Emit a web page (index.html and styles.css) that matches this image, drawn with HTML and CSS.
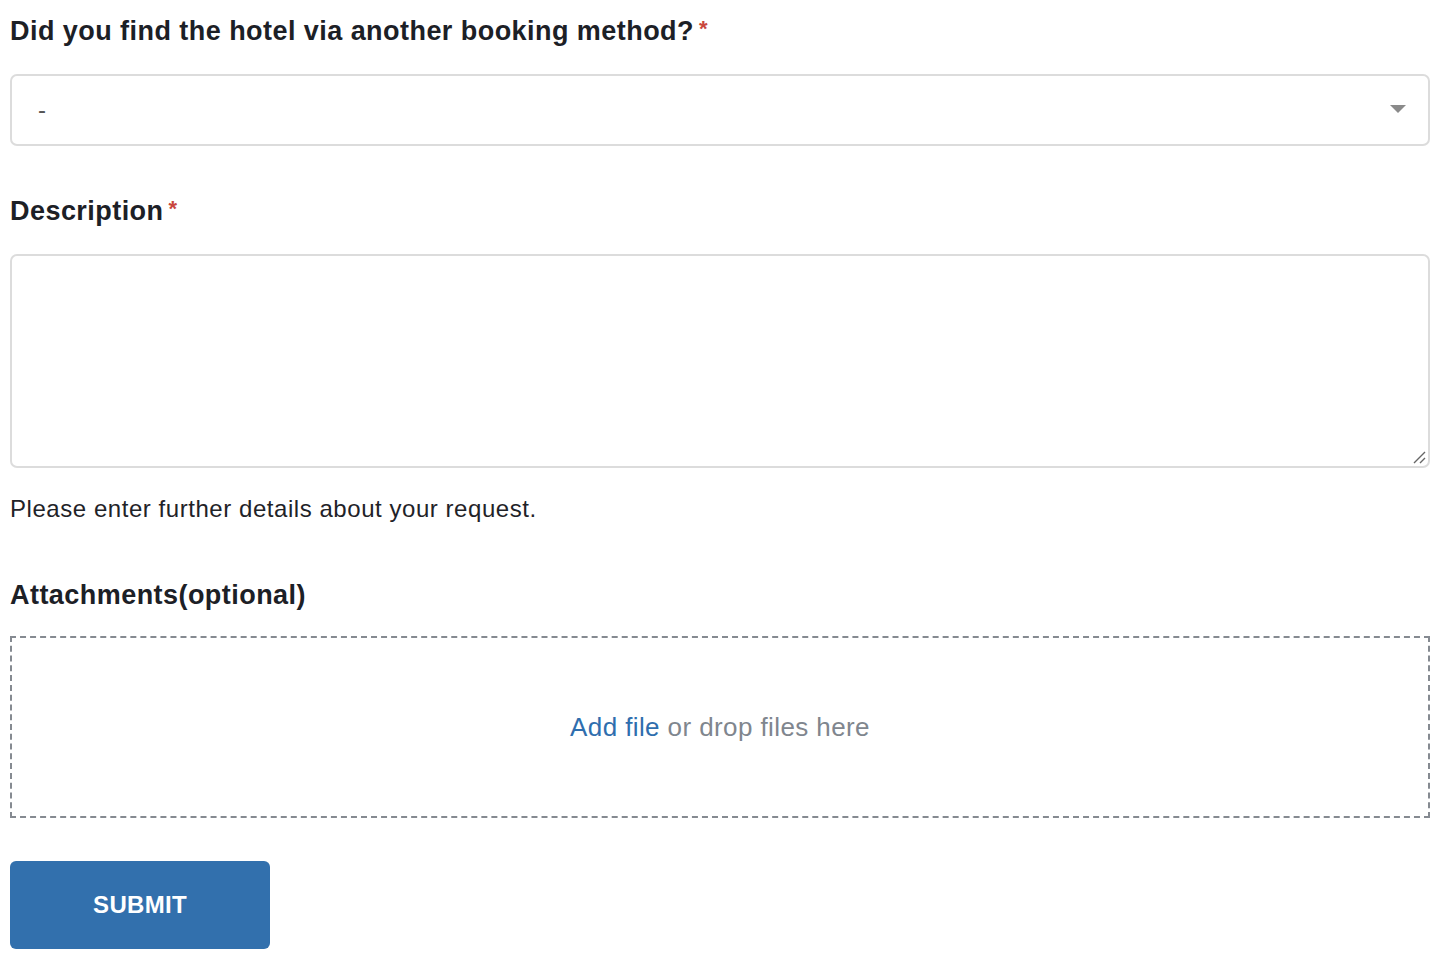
FILE: index.html
```html
<!DOCTYPE html>
<html>
<head>
<meta charset="utf-8">
<link rel="stylesheet" href="styles.css">
</head>
<body>
<form class="form">
  <div class="field">
    <label class="label">Did you find the hotel via another booking method?<span class="req">*</span></label>
    <div class="select">
      <span class="select-value">-</span>
      <svg class="caret" width="16" height="8" viewBox="0 0 16 8"><path d="M0 0 H16 L8 8 Z" fill="#8a8a8a"/></svg>
    </div>
  </div>
  <div class="field">
    <label class="label">Description<span class="req">*</span></label>
    <div class="textarea">
      <svg class="grip" width="14" height="14" viewBox="0 0 14 14"><path d="M2 13 L13 2 M8 13 L13 8" stroke="#666" stroke-width="1.4"/></svg>
    </div>
    <p class="hint">Please enter further details about your request.</p>
  </div>
  <div class="field">
    <label class="label">Attachments(optional)</label>
    <div class="drop"><span class="link">Add file</span>&nbsp;or drop files here</div>
  </div>
  <button type="button" class="submit">SUBMIT</button>
</form>
</body>
</html>
```
FILE: styles.css
```css
html, body { margin: 0; padding: 0; background: #fff; }
body { font-family: "Liberation Sans", Arial, sans-serif; color: #1f2328; }
.form { padding: 14px 22px 0 10px; display: flex; flex-direction: column; }
.field { display: flex; flex-direction: column; }
.label { font-size: 27px; font-weight: bold; line-height: 34px; color: #1c2026; letter-spacing: 0.45px; }
.req { color: #c9463d; font-size: 22px; margin-left: 5px; vertical-align: top; position: relative; top: -2px; letter-spacing: 0; }
.select { margin-top: 26px; height: 68px; border: 2px solid #dcdcdc; border-radius: 7px; display: flex; align-items: center; justify-content: space-between; padding: 0 22px 0 26px; margin-bottom: 48px; }
.select-value { font-size: 24px; color: #555; }
.caret { margin-top: -2px; }
.textarea { margin-top: 26px; height: 210px; border: 2px solid #dcdcdc; border-radius: 7px; position: relative; }
.grip { position: absolute; right: 2px; bottom: 2px; }
.hint { margin: 26px 0 0; font-size: 24px; line-height: 30px; color: #1f2328; letter-spacing: 0.55px; }
.field:nth-child(2) { margin-bottom: 54px; }
.drop { margin-top: 24px; height: 178px; border: 2px dashed #858a91; display: flex; align-items: center; justify-content: center; font-size: 26px; color: #80868e; letter-spacing: 0.4px; }
.link { color: #2f6eae; }
.submit { margin-top: 43px; width: 260px; height: 88px; background: #3270ad; color: #fff; border: none; border-radius: 6px; font-family: "Liberation Sans", Arial, sans-serif; font-weight: bold; font-size: 24px; letter-spacing: 0.3px; }
```
